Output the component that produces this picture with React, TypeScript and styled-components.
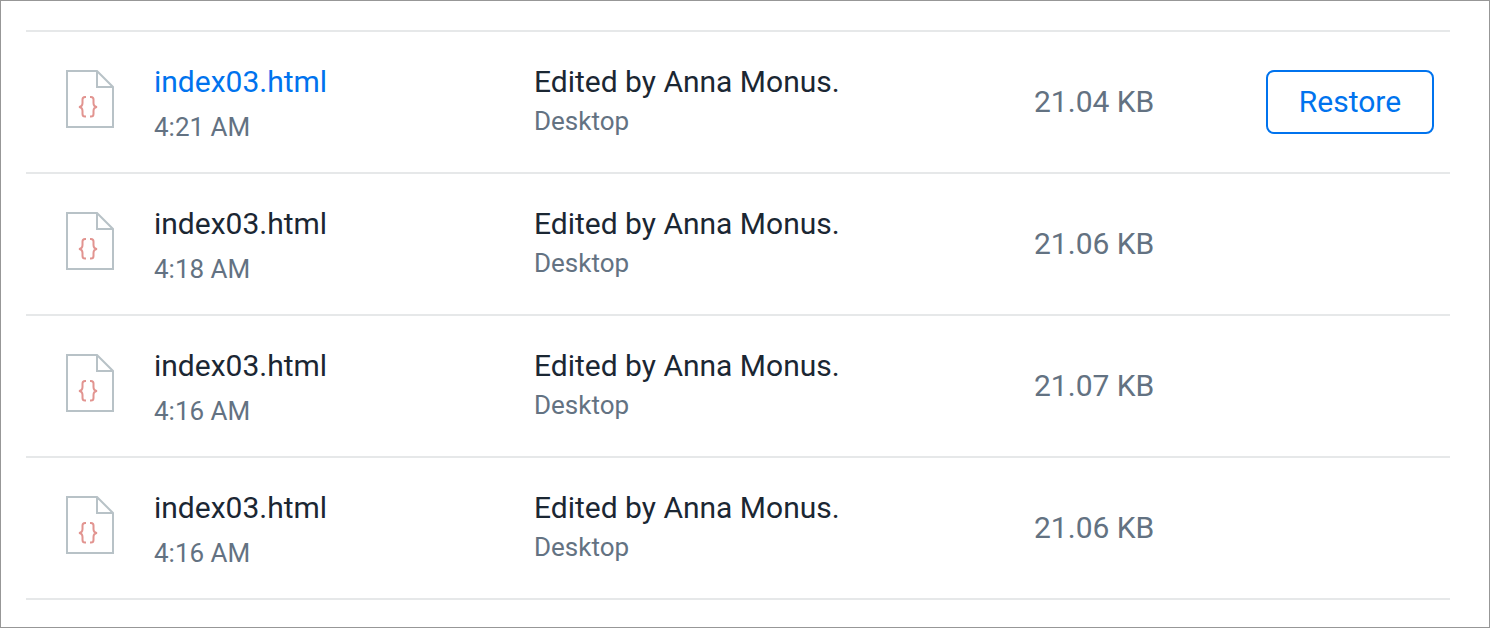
import React from "react";
import styled, { createGlobalStyle } from "styled-components";

const GlobalStyle = createGlobalStyle`
  *, *::before, *::after { box-sizing: border-box; }
  body {
    margin: 0;
    background: #ffffff;
    color: #1b2733;
    font-family: Roboto, "Liberation Sans", sans-serif;
  }
`;

const Panel = styled.main`
  min-height: 100vh;
  padding: 29px 39px 27px 25px;
  border: 1px solid #979797;
`;

const VersionTable = styled.table`
  width: 100%;
  table-layout: fixed;
  border-collapse: separate;
  border-spacing: 0;
  border-top: 2px solid #e6e8e9;
`;

const Column = styled.col<{ $width?: number }>`
  width: ${({ $width }) => ($width ? `${$width}px` : "auto")};
`;

const Cell = styled.td`
  height: 142px;
  padding: 0;
  border-bottom: 2px solid #e6e8e9;
  vertical-align: middle;
`;

const IconCell = styled(Cell)`
  padding: 0 0 6px 40px;
`;

const TextCell = styled(Cell)`
  padding-top: 32px;
  vertical-align: top;
`;

const SizeCell = styled(Cell)`
  color: #637282;
  font-size: 30px;
  line-height: 36px;
`;

const ActionCell = styled(Cell)`
  padding-right: 16px;
  text-align: right;
`;

const FileIcon = styled.svg`
  display: block;
  width: 48px;
  height: 58px;
`;

const FileLink = styled.a<{ $current?: boolean }>`
  display: block;
  color: ${({ $current }) => ($current ? "#0073ee" : "#1b2733")};
  font-size: 30px;
  line-height: 36px;
  text-decoration: none;
`;

const Time = styled.time`
  display: block;
  margin-top: 12px;
  color: #637282;
  font-size: 26px;
  line-height: 30px;
`;

const Activity = styled.div`
  font-size: 30px;
  line-height: 36px;
`;

const Source = styled.div`
  margin-top: 6px;
  color: #637282;
  font-size: 26px;
  line-height: 30px;
`;

const RestoreButton = styled.button`
  width: 168px;
  height: 64px;
  padding: 0;
  border: 2px solid #0073ee;
  border-radius: 8px;
  background: #ffffff;
  color: #0073ee;
  font: inherit;
  font-size: 30px;
  line-height: 36px;
  cursor: pointer;
`;

const versions = [
  { time: "4:21 AM", size: "21.04 KB", current: true },
  { time: "4:18 AM", size: "21.06 KB", current: false },
  { time: "4:16 AM", size: "21.07 KB", current: false },
  { time: "4:16 AM", size: "21.06 KB", current: false },
];

function CodeFileIcon() {
  return (
    <FileIcon viewBox="0 0 48 58" fill="none" aria-hidden="true">
      <path d="M1 1H31L47 17V57H1Z M31 1V17H47" stroke="#b8c2c7" strokeWidth="2" />
      <path
        d="M20 27H19Q16.500 27 16.500 29.500V33Q16.500 36.500 13 37Q16.500 37.500 16.500 41V44Q16.500 46.500 19 46.500H20"
        stroke="#e29490"
        strokeWidth="2"
      />
      <path
        d="M24 27H25Q27.500 27 27.500 29.500V33Q27.500 36.500 31 37Q27.500 37.500 27.500 41V44Q27.500 46.500 25 46.500H24"
        stroke="#e29490"
        strokeWidth="2"
      />
    </FileIcon>
  );
}

export default function App() {
  return (
    <>
      <GlobalStyle />
      <Panel>
        <VersionTable aria-label="Version history">
          <colgroup>
            <Column $width={128} />
            <Column $width={380} />
            <Column />
            <Column $width={232} />
            <Column $width={184} />
          </colgroup>
          <tbody>
            {versions.map((version, index) => (
              <tr key={index}>
                <IconCell>
                  <CodeFileIcon />
                </IconCell>
                <TextCell>
                  <FileLink href="#" $current={version.current}>
                    index03.html
                  </FileLink>
                  <Time>{version.time}</Time>
                </TextCell>
                <TextCell>
                  <Activity>Edited by Anna Monus.</Activity>
                  <Source>Desktop</Source>
                </TextCell>
                <SizeCell>{version.size}</SizeCell>
                <ActionCell>
                  {version.current && <RestoreButton type="button">Restore</RestoreButton>}
                </ActionCell>
              </tr>
            ))}
          </tbody>
        </VersionTable>
      </Panel>
    </>
  );
}
